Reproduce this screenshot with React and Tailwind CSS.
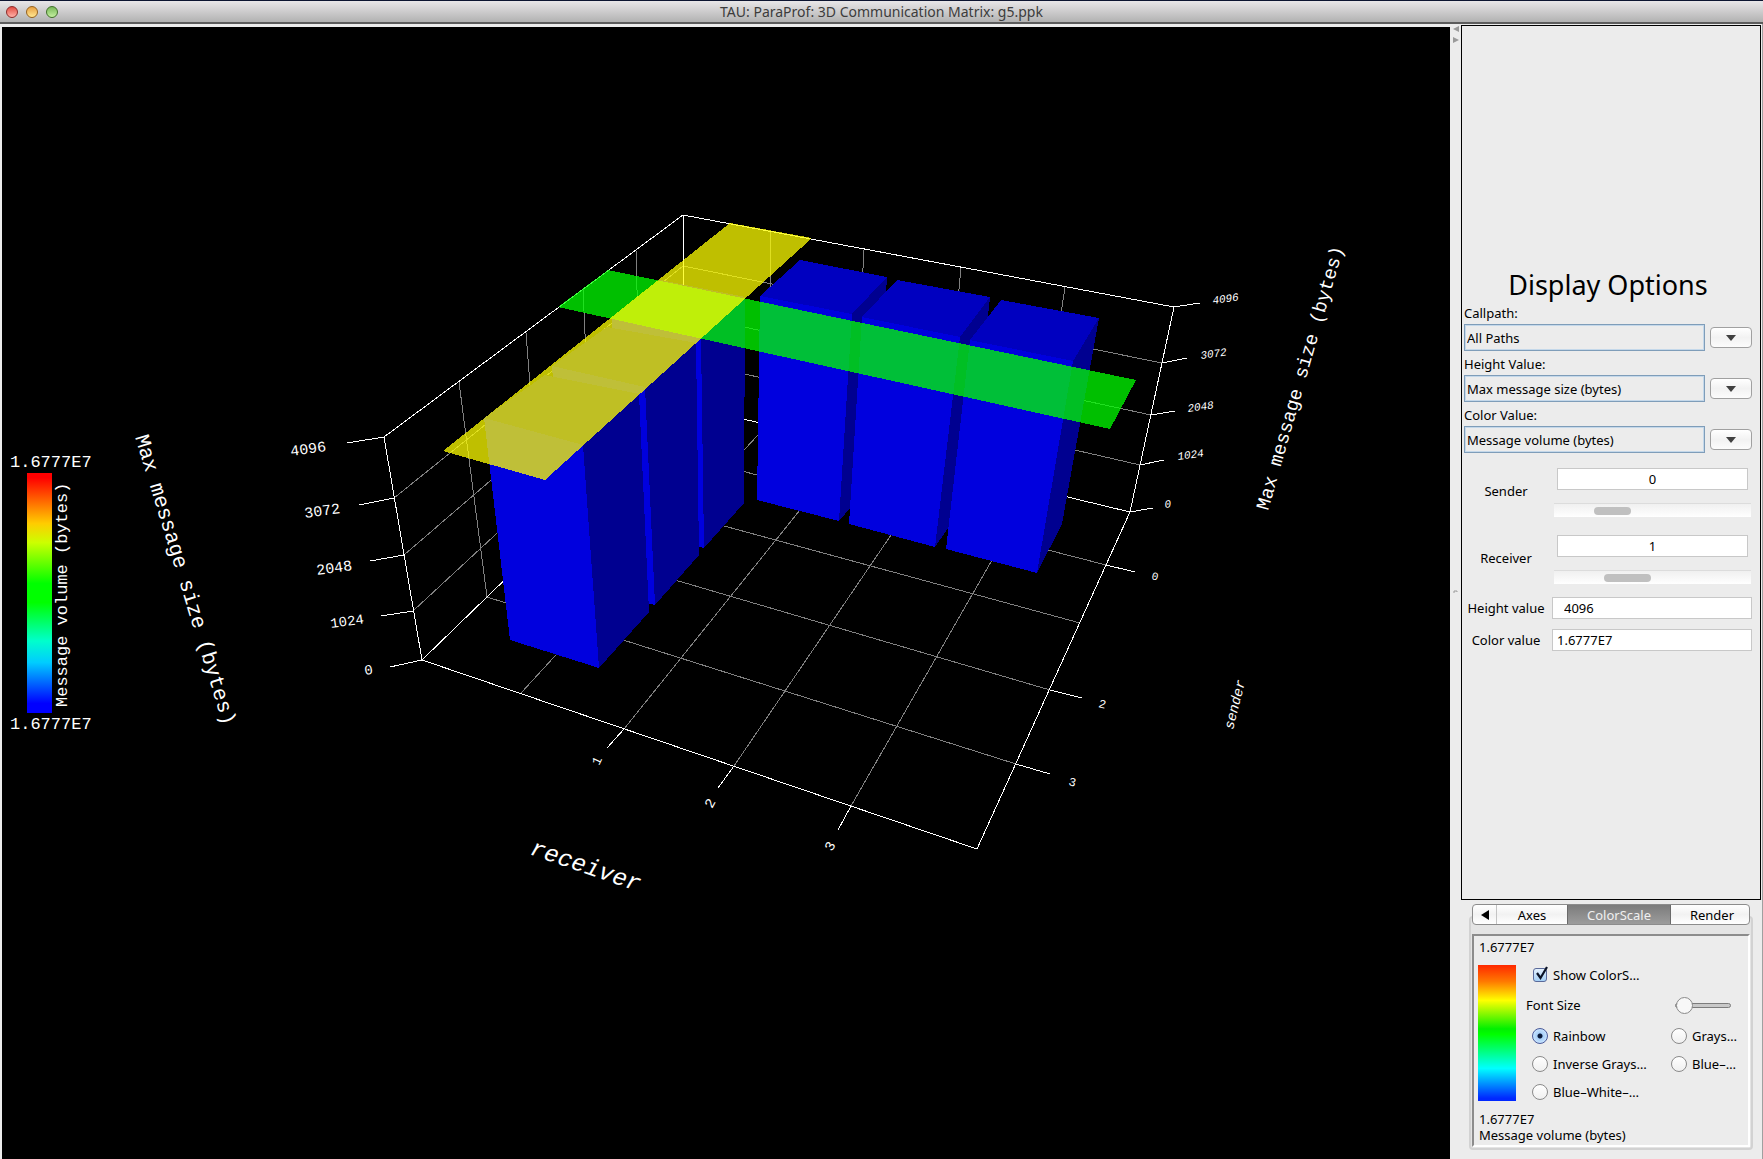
import React, { useState } from 'react';
import clsx from 'clsx';

const WHITE_LINES = [
  // box outline
  [384, 437, 683, 215],
  [683, 215, 1174, 307],
  [384, 437, 422, 660],
  [422, 660, 977, 849],
  [977, 849, 1130, 512],
  [1130, 512, 1174, 307],
  [683, 215, 685, 405],
  [422, 660, 685, 405],
  [685, 405, 1130, 512],
  // left ticks
  [347, 443, 384, 437],
  [359, 505, 394, 498],
  [370, 561, 404, 555],
  [381, 616, 413, 611],
  [390, 667, 422, 660],
  // right ticks
  [1174, 307, 1200, 303],
  [1162, 363, 1187, 358],
  [1151, 415, 1175, 411],
  [1140, 465, 1164, 460],
  [1130, 512, 1153, 508],
  // sender ticks
  [1106, 565, 1135, 572],
  [1050, 690, 1082, 698],
  [1016, 764, 1050, 774],
  // receiver ticks
  [624, 729, 607, 748],
  [734, 766, 718, 788],
  [851, 806, 838, 830],
];

const GRAY_LINES = [
  // left wall
  [636, 250, 641, 445],
  [583, 289, 592, 490],
  [526, 333, 542, 541],
  [459, 382, 487, 597],
  [394, 498, 683, 266],
  [404, 555, 684, 314],
  [413, 611, 684, 360],
  // back wall
  [771, 231, 768, 424],
  [864, 250, 853, 446],
  [961, 268, 942, 467],
  [1065, 287, 1035, 489],
  [683, 266, 1162, 363],
  [684, 314, 1151, 415],
  [684, 360, 1140, 465],
  // floor
  [521, 693, 768, 424],
  [624, 729, 853, 444],
  [734, 766, 942, 460],
  [851, 806, 1035, 485],
  [641, 445, 1106, 565],
  [592, 490, 1080, 623],
  [542, 541, 1050, 690],
  [487, 597, 1016, 764],
];

// drawn back to front
const BARS = [
  { front: '612,318 701,338 704,548 620,524', side: '701,338 745,297 744,503 704,548', top: '612,318 660,280 745,297 701,338', topFill: '#000090' },
  { front: '552,366 645,387 655,605 567,582', side: '645,387 696,343 699,555 655,605', top: '552,366 607,327 696,343 645,387', topFill: '#000090' },
  { front: '484,418 583,445 599,668 510,640', side: '583,445 639,394 649,612 599,668', top: '484,418 545,375 639,394 583,445', topFill: '#000090' },
  { front: '760,296 852,314 839,521 757,500', side: '852,314 887,277 874,480 839,521', top: '760,296 800,260 887,277 852,314', topFill: '#0000c0' },
  { front: '862,317 960,337 935,547 849,524', side: '960,337 990,297 968,499 935,547', top: '862,317 897,280 990,297 960,337', topFill: '#0000c0' },
  { front: '970,340 1073,361 1037,573 946,549', side: '1073,361 1099,318 1062,524 1037,573', top: '970,340 1001,300 1099,318 1073,361', topFill: '#0000c0' },
];

const LABELS = [
  { text: '1.6777E7', x: 10, y: 467, r: 0, size: 17 },
  { text: '1.6777E7', x: 10, y: 729, r: 0, size: 17 },
  { text: 'Message volume (bytes)', x: 67, y: 707, r: -90, size: 17 },
  { text: 'Max message size (bytes)', x: 135, y: 437, r: 73, size: 21 },
  { text: '4096', x: 291, y: 456, r: -8, size: 15 },
  { text: '3072', x: 305, y: 518, r: -8, size: 15 },
  { text: '2048', x: 317, y: 575, r: -8, size: 15 },
  { text: '1024', x: 331, y: 628, r: -8, size: 14 },
  { text: '0', x: 365, y: 675, r: -8, size: 14 },
  { text: 'Max message size (bytes)', x: 1268, y: 511, r: -74, size: 19 },
  { text: '4096', x: 1213, y: 304, r: -8, size: 11, italic: true },
  { text: '3072', x: 1201, y: 359, r: -8, size: 11, italic: true },
  { text: '2048', x: 1188, y: 412, r: -8, size: 11, italic: true },
  { text: '1024', x: 1178, y: 460, r: -8, size: 11, italic: true },
  { text: '0', x: 1165, y: 508, r: -8, size: 11, italic: true },
  { text: '0', x: 1151, y: 579, r: 14, size: 11 },
  { text: '2', x: 1098, y: 707, r: 14, size: 12 },
  { text: '3', x: 1068, y: 785, r: 14, size: 12 },
  { text: '1', x: 599, y: 766, r: -65, size: 13 },
  { text: '2', x: 712, y: 809, r: -62, size: 14 },
  { text: '3', x: 832, y: 852, r: -62, size: 14 },
  { text: 'receiver', x: 529, y: 854, r: 19, size: 24, italic: true },
  { text: 'sender', x: 1233, y: 730, r: -76, size: 14, italic: true },
];

const Lines = ({ lines, color }) => (
  <g stroke={color} strokeWidth="1" shapeRendering="crispEdges">
    {lines.map(([x1, y1, x2, y2]) => (
      <line key={`${x1}-${y1}-${x2}-${y2}`} x1={x1} y1={y1} x2={x2} y2={y2} />
    ))}
  </g>
);

const Scene = () => (
  <svg
    viewBox="2 27 1448 1132"
    className="block h-full w-full bg-black"
    role="img"
    aria-label="3D communication matrix"
  >
    <defs>
      <linearGradient id="scale" x1="0" y1="0" x2="0" y2="1">
        <stop offset="0.02" stopColor="#ff0000" />
        <stop offset="0.21" stopColor="#ffcc00" />
        <stop offset="0.29" stopColor="#ccff00" />
        <stop offset="0.46" stopColor="#00ff00" />
        <stop offset="0.54" stopColor="#00ff00" />
        <stop offset="0.7" stopColor="#00ffcc" />
        <stop offset="0.79" stopColor="#00ccff" />
        <stop offset="0.96" stopColor="#0000ff" />
      </linearGradient>
    </defs>

    <Lines lines={GRAY_LINES} color="#808080" />
    <Lines lines={WHITE_LINES} color="#ffffff" />

    <g shapeRendering="crispEdges">
      {BARS.map((bar) => (
        <g key={bar.front}>
          <polygon points={bar.top} fill={bar.topFill} />
          <polygon points={bar.side} fill="#000090" />
          <polygon points={bar.front} fill="#0000de" />
        </g>
      ))}
      {/* Selection planes */}
      <polygon points="608,270 1136,380 1110,429 558,307" fill="#00ff00" fillOpacity="0.75" />
      <polygon points="443,451 730,223 812,238 545,480" fill="#ffff00" fillOpacity="0.75" />
      <rect x="27" y="473" width="25" height="240" fill="url(#scale)" />
    </g>

    <g fill="#ffffff" className="font-['Liberation_Mono',monospace]">
      {LABELS.map((l) => (
        <text
          key={`${l.text}-${l.x}-${l.y}`}
          transform={`translate(${l.x} ${l.y}) rotate(${l.r})`}
          fontSize={l.size}
          fontStyle={l.italic ? 'italic' : 'normal'}
        >
          {l.text}
        </text>
      ))}
    </g>
  </svg>
);

const Combo = ({ id, label, value }) => (
  <div className="mb-1">
    <label htmlFor={id} className="block h-5 leading-[18px]">
      {label}
    </label>
    <div className="flex items-center gap-[5px]">
      <select
        id={id}
        className="h-[27px] min-w-0 flex-1 appearance-none border border-[#7f9db9] bg-[#ececec] px-[2px] shadow-[inset_0_0_0_1px_#c4d8ea] outline-none"
      >
        <option>{value}</option>
      </select>
      <button
        type="button"
        aria-label={`${label} list`}
        className="flex h-[21px] w-[42px] items-center justify-center rounded-[4px] border border-[#a0a0a0] bg-linear-to-b from-white via-[#f2f2f2] to-[#fcfcfc]"
      >
        <svg viewBox="0 0 10 6" className="h-[6px] w-[10px]">
          <path d="M0 0h10L5 6z" fill="#404040" />
        </svg>
      </button>
    </div>
  </div>
);

const FIELD = 'h-[22px] w-full min-w-0 border border-[#c8c8c8] bg-white outline-none';

const TRACK =
  'block h-[14px] w-full appearance-none border-t border-[#dcdcdc] bg-linear-to-b from-[#f0f0f0] to-white [&::-webkit-slider-thumb]:h-2 [&::-webkit-slider-thumb]:appearance-none [&::-webkit-slider-thumb]:rounded-full [&::-webkit-slider-thumb]:bg-[#c0c0c0]';

const Stepper = ({ id, label, min, value, onChange, className }) => (
  <div className="mb-[18px] flex items-center">
    <label htmlFor={id} className="w-[84px] pb-1 text-center">
      {label}
    </label>
    <div className="ml-[6px] mr-[1px] flex-1">
      <div className="px-[3px]">
        <input id={id} className={clsx(FIELD, 'text-center')} value={value} readOnly />
      </div>
      <input
        type="range"
        aria-label={`${label} scroll`}
        min={min}
        max="3"
        value={value}
        onChange={(e) => onChange(Number(e.target.value))}
        className={clsx(TRACK, 'mt-[13px]', className)}
      />
    </div>
  </div>
);

const DisplayOptions = () => {
  const [sender, setSender] = useState(0);
  const [receiver, setReceiver] = useState(1);

  return (
    <section className="flex flex-1 flex-col justify-center border border-black pb-[3px] pl-[2px] pr-2">
      <h1 className="h-[33px] text-center text-[27px] leading-7">Display Options</h1>
      <Combo id="callpath" label="Callpath:" value="All Paths" />
      <Combo id="height-metric" label="Height Value:" value="Max message size (bytes)" />
      <Combo id="color-metric" label="Color Value:" value="Message volume (bytes)" />

      <div className="mt-[11px]">
        <Stepper
          id="sender"
          label="Sender"
          min="-1"
          value={sender}
          onChange={setSender}
          className="[&::-webkit-slider-thumb]:w-[37px]"
        />
        <Stepper
          id="receiver"
          label="Receiver"
          min="0"
          value={receiver}
          onChange={setReceiver}
          className="[&::-webkit-slider-thumb]:w-[47px]"
        />
      </div>

      <div className="-mt-[5px] mb-[10px] flex items-center gap-1">
        <label htmlFor="height-value" className="w-[84px] shrink-0 text-center">
          Height value
        </label>
        <input id="height-value" className={clsx(FIELD, 'px-[11px]')} value="4096" readOnly />
      </div>
      <div className="flex items-center gap-1">
        <label htmlFor="color-value" className="w-[84px] shrink-0 text-center">
          Color value
        </label>
        <input id="color-value" className={clsx(FIELD, 'px-1')} value="1.6777E7" readOnly />
      </div>
    </section>
  );
};

const Radio = ({ label, checked, onChange }) => (
  <label className="flex h-7 items-center gap-[5px] whitespace-nowrap">
    <input
      type="radio"
      name="scale"
      checked={checked}
      onChange={onChange}
      className="h-4 w-4 shrink-0 appearance-none rounded-full border border-[#8a8a8a] bg-linear-to-b from-white to-[#f0f0f0] checked:border-[#4a5a9a] checked:bg-[radial-gradient(circle,#0a1a3a_0_2px,#a8d0f8_3px,#cfe8ff_8px)]"
    />
    {label}
  </label>
);

const ColorScale = () => {
  const [scale, setScale] = useState('Rainbow');
  const [shown, setShown] = useState(true);
  const [fontSize, setFontSize] = useState(0);

  const radio = (label) => (
    <Radio label={label} checked={scale === label} onChange={() => setScale(label)} />
  );

  return (
    <div className="border-2 border-[#8c8c8c] border-r-white border-b-white bg-[#ececec] pl-1 pt-[3px]">
      <p className="h-[26px] pl-px leading-4">1.6777E7</p>
      <div className="flex h-[136px]">
        <div className="w-[38px] shrink-0 bg-linear-[to_bottom,#ff2800_0%,#ff7800_12%,#ffff00_26%,#00f000_47%,#00ff00_51%,#00ffff_76%,#0028ff_98%]" />
        <div className="min-w-0 flex-1 pl-[10px]">
          <label className="ml-[7px] flex h-[19px] items-center gap-[6px]">
            <span className="relative flex">
              <input
                type="checkbox"
                checked={shown}
                onChange={(e) => setShown(e.target.checked)}
                className="h-[14px] w-[14px] appearance-none rounded-[3px] border border-[#5a6a9a] bg-linear-to-b from-[#e4f1fe] to-[#a4cff5]"
              />
              {shown && (
                <svg viewBox="0 0 16 16" className="pointer-events-none absolute -top-[2px] left-0 h-4 w-4">
                  <path d="M4 7l3.500 5L14 1" fill="none" stroke="#0a1226" strokeWidth="2.200" />
                </svg>
              )}
            </span>
            <span>Show ColorS…</span>
          </label>
          <div className="mt-[9px] flex h-6 items-center">
            <label htmlFor="font-size" className="flex-1">
              Font Size
            </label>
            <input
              id="font-size"
              type="range"
              min="0"
              max="10"
              value={fontSize}
              onChange={(e) => setFontSize(Number(e.target.value))}
              className="mr-[17px] h-[17px] w-[56px] appearance-none bg-transparent [&::-webkit-slider-runnable-track]:h-[5px] [&::-webkit-slider-runnable-track]:rounded-full [&::-webkit-slider-runnable-track]:border [&::-webkit-slider-runnable-track]:border-[#7c7c7c] [&::-webkit-slider-runnable-track]:bg-[#c8c8c8] [&::-webkit-slider-thumb]:-mt-[7px] [&::-webkit-slider-thumb]:h-[17px] [&::-webkit-slider-thumb]:w-[17px] [&::-webkit-slider-thumb]:appearance-none [&::-webkit-slider-thumb]:rounded-full [&::-webkit-slider-thumb]:border [&::-webkit-slider-thumb]:border-[#8a8a8a] [&::-webkit-slider-thumb]:bg-[#f8f8f8]"
            />
          </div>
          <div className="ml-[6px] mt-[5px] grid grid-cols-[139px_1fr]">
            {radio('Rainbow')}
            {radio('Grays…')}
            {radio('Inverse Grays…')}
            {radio('Blue–…')}
            {radio('Blue–White–…')}
          </div>
        </div>
      </div>
      <p className="mt-[10px] pl-px leading-4">1.6777E7</p>
      <p className="pb-[2px] pl-px leading-4">Message volume (bytes)</p>
    </div>
  );
};

const TabPanel = () => (
  <section className="flex flex-col px-2 pb-[9px] pt-1">
    <nav role="tablist" className="z-10 mx-[3px] flex h-[21px] overflow-hidden rounded-[4px] border border-[#8c8c8c] bg-linear-to-b from-white via-[#f2f2f2] to-white">
      <button type="button" aria-label="Previous tabs" className="flex w-6 items-center justify-center border-r border-[#c4c4c4]">
        <svg viewBox="0 0 8 10" className="h-[10px] w-2">
          <path d="M8 0v10L0 5z" fill="#000" />
        </svg>
      </button>
      <button type="button" role="tab" className="w-[70px] leading-4">
        Axes
      </button>
      <button
        type="button"
        role="tab"
        aria-selected="true"
        className="w-[104px] border-x border-[#6a6a6a] bg-linear-to-b from-[#7c7c7c] to-[#9c9c9c] leading-4 text-[#f0f0f0]"
      >
        ColorScale
      </button>
      <button type="button" role="tab" className="flex-1 pl-1 leading-4">
        Render
      </button>
    </nav>
    <div className="-mt-[9px] rounded-[4px] border-2 border-[#d2d2d2] bg-[#e4e4e4] px-px pb-px pt-4">
      <ColorScale />
    </div>
  </section>
);

const Divider = () => (
  <div className="flex w-[11px] shrink-0 flex-col pl-[3px]">
    <svg viewBox="0 0 6 18" className="mt-[2px] h-[18px] w-[6px]" fill="#9a9a9a">
      <path d="M6 0v6L0 3z" />
      <path d="M0 11v6l6-3z" />
    </svg>
    <div className="flex flex-1 items-center pb-5">
      <svg viewBox="0 0 5 4" className="h-1 w-[5px]">
        <path d="M1 3V1h3v1" fill="none" stroke="#9a9a9a" />
      </svg>
    </div>
  </div>
);

const TitleBar = () => (
  <header className="relative flex h-6 shrink-0 items-center justify-center border-b-2 border-t border-b-[#5c5c5c] border-t-[#0c1430] bg-linear-to-b from-[#e8e6e8] to-[#b2b2b2]">
    <div className="absolute left-[6px] flex gap-2">
      <button type="button" aria-label="Close" className="h-3 w-3 rounded-full border border-[#8c2a28] bg-linear-to-b from-[#e04840] to-[#ffb0a8]" />
      <button type="button" aria-label="Minimize" className="h-3 w-3 rounded-full border border-[#96621c] bg-linear-to-b from-[#e8a040] to-[#ffe890]" />
      <button type="button" aria-label="Zoom" className="h-3 w-3 rounded-full border border-[#3f7028] bg-linear-to-b from-[#78b858] to-[#c4f0a0]" />
    </div>
    <span className="text-sm leading-4 text-[#3c3c3c]">TAU: ParaProf: 3D Communication Matrix: g5.ppk</span>
  </header>
);

const App = () => (
  <div className="flex h-screen flex-col bg-[#ececec] font-['Noto_Sans',sans-serif] text-[13px] leading-4 text-black">
    <TitleBar />
    <div className="flex min-h-0 flex-1">
      <main className="min-w-0 flex-1 pl-[2px] pt-[3px]">
        <Scene />
      </main>
      <Divider />
      <aside className="mr-px flex w-[300px] shrink-0 flex-col pt-px">
        <DisplayOptions />
        <TabPanel />
      </aside>
      <div className="w-px bg-[#a0a0a0]" />
    </div>
  </div>
);

export default App;
